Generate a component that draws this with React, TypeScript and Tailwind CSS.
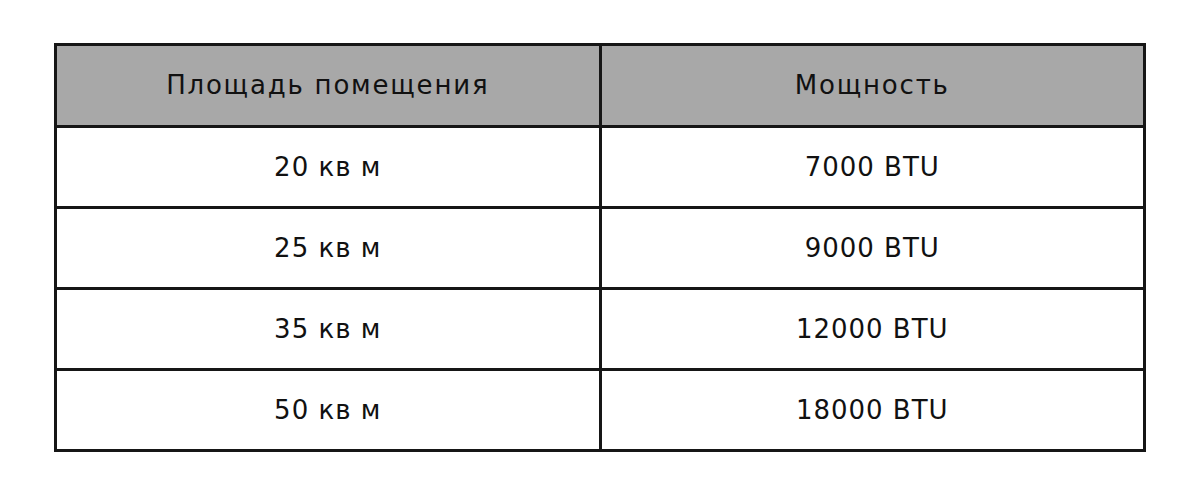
import React from 'react';

const rows = [
    ['20 кв м', '7000 BTU'],
    ['25 кв м', '9000 BTU'],
    ['35 кв м', '12000 BTU'],
    ['50 кв м', '18000 BTU'],
];

export default function App() {
    return (
        <div className="w-[1200px] h-[492px] bg-white pt-[43px] pl-[54px]" style={{ fontFamily: '"DejaVu Sans", sans-serif' }}>
            <table className="w-[1092px] border-collapse text-[26px] text-[#111111]">
                <thead>
                    <tr className="bg-[#a8a8a8] h-[82px] tracking-[1.8px]">
                        <th className="w-1/2 border-[3px] border-[#161616] font-normal text-center">Площадь помещения</th>
                        <th className="w-1/2 border-[3px] border-[#161616] font-normal text-center">Мощность</th>
                    </tr>
                </thead>
                <tbody className="tracking-[1px]">
                    {rows.map((r, i) => (
                        <tr key={i} className="h-[81px]">
                            <td className="border-[3px] border-[#161616] text-center">{r[0]}</td>
                            <td className="border-[3px] border-[#161616] text-center">{r[1]}</td>
                        </tr>
                    ))}
                </tbody>
            </table>
        </div>
    );
}
